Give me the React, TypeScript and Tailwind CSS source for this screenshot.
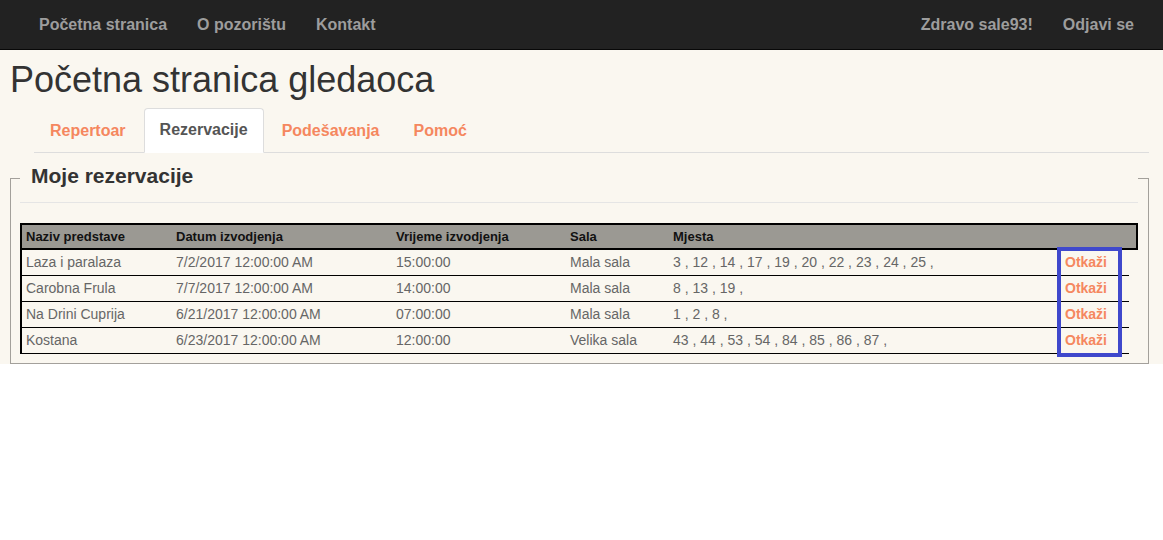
import React from "react";

const rows = [
  ["Laza i paralaza", "7/2/2017 12:00:00 AM", "15:00:00", "Mala sala", "3 , 12 , 14 , 17 , 19 , 20 , 22 , 23 , 24 , 25 ,"],
  ["Carobna Frula", "7/7/2017 12:00:00 AM", "14:00:00", "Mala sala", "8 , 13 , 19 ,"],
  ["Na Drini Cuprija", "6/21/2017 12:00:00 AM", "07:00:00", "Mala sala", "1 , 2 , 8 ,"],
  ["Kostana", "6/23/2017 12:00:00 AM", "12:00:00", "Velika sala", "43 , 44 , 53 , 54 , 84 , 85 , 86 , 87 ,"],
];

const cols = "grid grid-cols-[148px_220px_174px_103px_392px_70px]";

export default function App() {
  return (
    <div className="font-['Liberation_Sans',Arial,sans-serif]">
      <nav className="h-[50px] bg-[#222] border-b border-[#080808] flex items-center justify-between text-[16px] font-bold text-[#9d9d9d] leading-[22px]">
        <div className="flex pl-[24px]">
          <a className="px-[15px]">Početna stranica</a>
          <a className="px-[15px]">O pozorištu</a>
          <a className="px-[15px]">Kontakt</a>
        </div>
        <div className="flex pr-[14px]">
          <a className="px-[15px]">Zdravo sale93!</a>
          <a className="px-[15px]">Odjavi se</a>
        </div>
      </nav>
      <div className="bg-[#faf7f0]">
        <h1 className="pt-[10px] pl-[10px] text-[36px] leading-[40px] text-[#333] font-normal">
          Početna stranica gledaoca
        </h1>
        <div className="mt-[8px] ml-[34px] mr-[14px] border-b border-[#ddd] flex text-[16px] font-bold leading-[22px]">
          <span className="-mb-px mr-[2px] px-[15px] pt-[11px] pb-[10px] text-[#f5875f] border border-transparent">Repertoar</span>
          <span className="-mb-px mr-[2px] px-[15px] pt-[10px] pb-[11px] text-[#555] bg-white border border-[#ddd] border-b-white rounded-t-[4px]">Rezervacije</span>
          <span className="-mb-px mr-[2px] px-[15px] pt-[11px] pb-[10px] text-[#f5875f] border border-transparent">Podešavanja</span>
          <span className="-mb-px mr-[2px] px-[15px] pt-[11px] pb-[10px] text-[#f5875f] border border-transparent">Pomoć</span>
        </div>
        <fieldset className="ml-[10px] mr-[14px] border border-[#a3a09b] pl-[9px] pr-[10px] pb-[9px] min-w-0">
          <legend className="w-full pl-[11px] pt-[8px] pb-[11px] leading-[30px] text-[21px] font-bold text-[#333] border-b border-[#e5e5e5]">
            Moje rezervacije
          </legend>
          <div className="relative mt-[20px] text-[14px]">
            <div className={`${cols} w-[1118px] h-[27px] items-center bg-[#9b9993] border-2 border-black text-[13px] font-bold text-[#111]`}>
              <div className="pl-[4px]">Naziv predstave</div>
              <div className="pl-[6px]">Datum izvodjenja</div>
              <div className="pl-[6px]">Vrijeme izvodjenja</div>
              <div className="pl-[6px]">Sala</div>
              <div className="pl-[6px]">Mjesta</div>
              <div></div>
            </div>
            {rows.map((r, i) => (
              <div key={i} className={`${cols} w-[1109px] h-[26px] items-center border-l-2 border-b border-black text-[#666]`}>
                <div className="pl-[4px]">{r[0]}</div>
                <div className="pl-[6px]">{r[1]}</div>
                <div className="pl-[6px]">{r[2]}</div>
                <div className="pl-[6px]">{r[3]}</div>
                <div className="pl-[6px]">{r[4]}</div>
                <div className="pl-[6px] font-bold text-[#f5875f]">Otkaži</div>
              </div>
            ))}
            <div className="absolute left-[1037px] top-[24px] w-[65px] h-[110px] border-4 border-[#3f48cc]"></div>
          </div>
        </fieldset>
      </div>
    </div>
  );
}
